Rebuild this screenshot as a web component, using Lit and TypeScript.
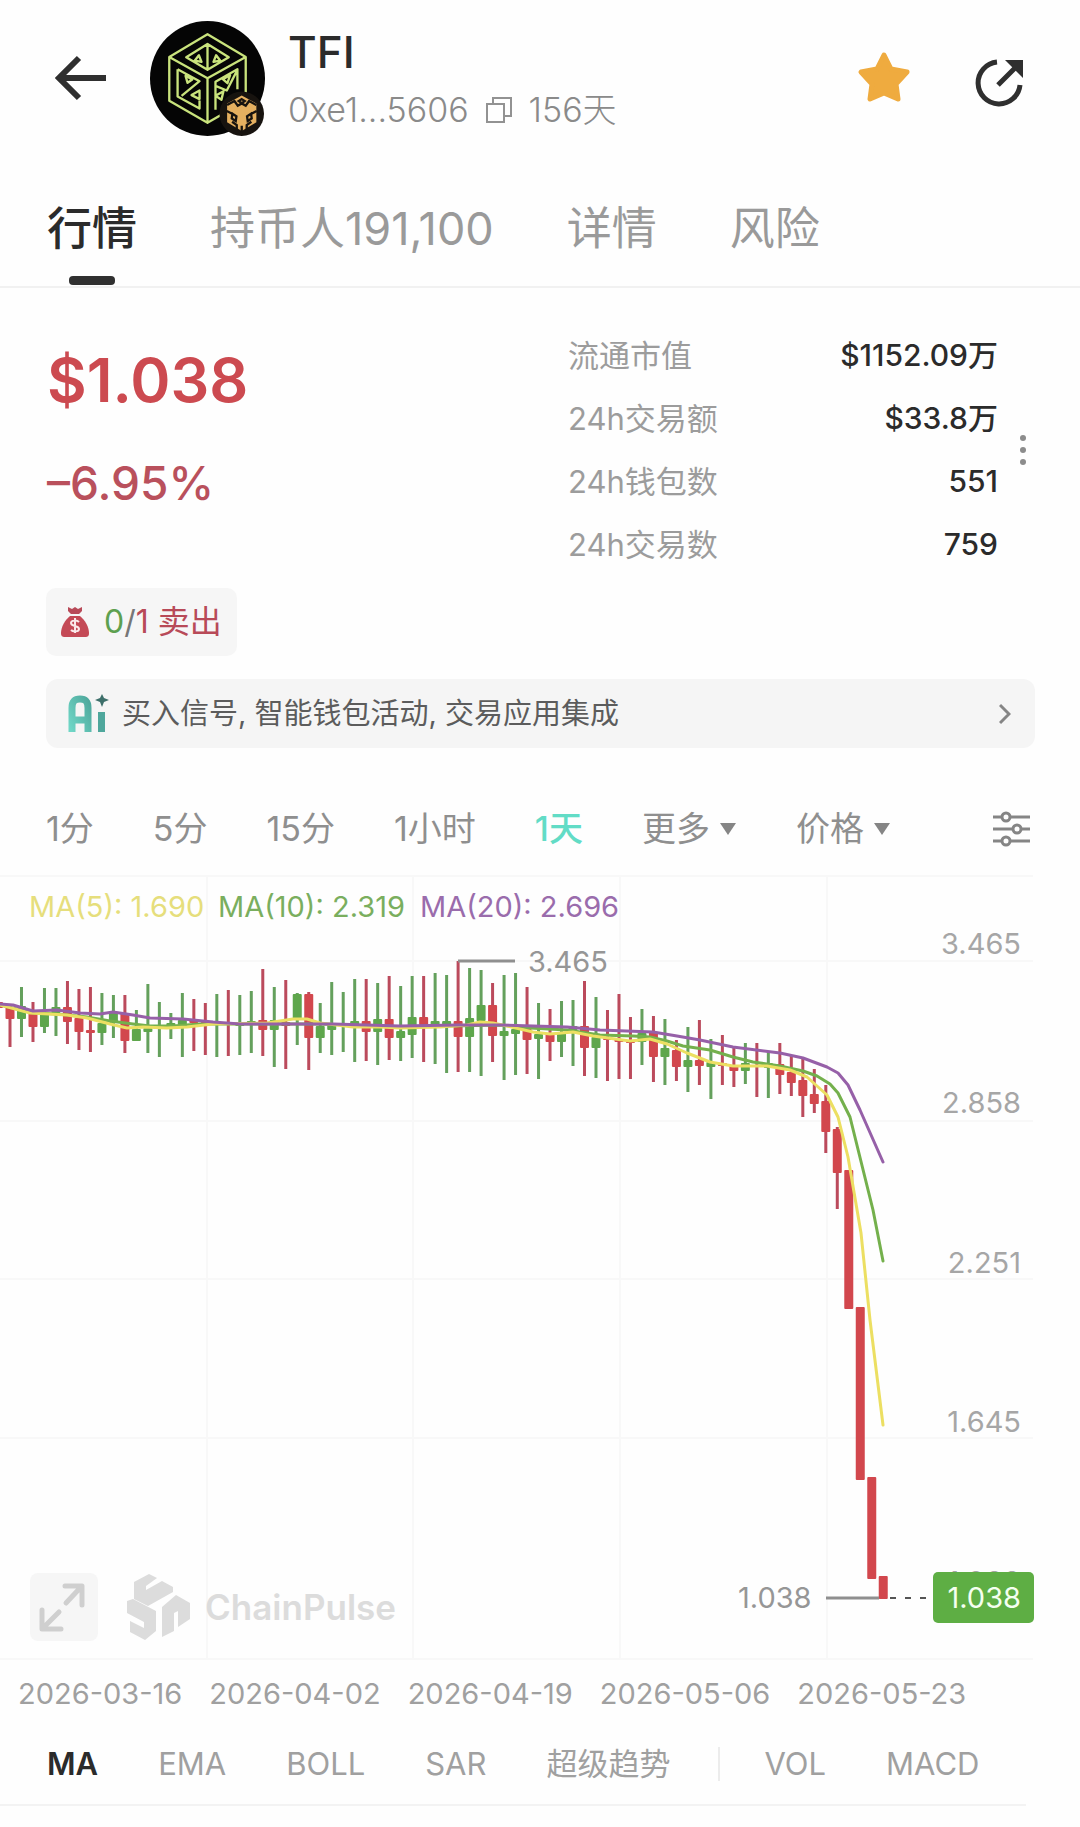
import { LitElement, html, svg, css } from "lit";
import { customElement, property, state } from "lit/decorators.js";
import { classMap } from "lit/directives/class-map.js";

type Dir = "u" | "d";
// direction, wick top, body top, body bottom, wick bottom
type Candle = [Dir, number, number, number, number];

const CHART_TOP = 875;
const CANDLE_STEP = 11.49;

const CANDLES: Candle[] = [
  ["d", 1000, 1002, 1008, 1009],
  ["d", 1005, 1007, 1019, 1047],
  ["u", 987, 1006, 1019, 1037],
  ["d", 1002, 1012, 1027, 1042],
  ["u", 988, 1014, 1027, 1033],
  ["u", 988, 1007, 1013, 1036],
  ["d", 981, 1007, 1022, 1044],
  ["d", 989, 1018, 1032, 1050],
  ["d", 987, 1030, 1033, 1052],
  ["u", 993, 1023, 1033, 1045],
  ["u", 995, 1013, 1023, 1038],
  ["d", 995, 1013, 1041, 1053],
  ["u", 1010, 1029, 1041, 1041],
  ["u", 984, 1028, 1032, 1053],
  ["u", 1002, 1025, 1027, 1057],
  ["u", 1013, 1023, 1028, 1039],
  ["u", 993, 1020, 1025, 1057],
  ["d", 999, 1019, 1023, 1051],
  ["d", 1003, 1022, 1024, 1055],
  ["u", 994, 1022, 1024, 1057],
  ["d", 990, 1023, 1025, 1056],
  ["u", 995, 1022, 1026, 1055],
  ["u", 991, 1021, 1025, 1053],
  ["d", 969, 1020, 1030, 1056],
  ["u", 987, 1020, 1030, 1067],
  ["d", 980, 1022, 1026, 1069],
  ["u", 993, 994, 1020, 1045],
  ["d", 992, 994, 1038, 1070],
  ["u", 1003, 1026, 1038, 1053],
  ["u", 982, 1024, 1030, 1055],
  ["u", 992, 1023, 1026, 1052],
  ["u", 979, 1021, 1025, 1062],
  ["d", 979, 1021, 1032, 1061],
  ["u", 983, 1019, 1032, 1065],
  ["d", 976, 1019, 1038, 1060],
  ["u", 986, 1031, 1038, 1061],
  ["u", 976, 1017, 1035, 1058],
  ["d", 976, 1017, 1025, 1062],
  ["u", 973, 1021, 1025, 1064],
  ["u", 975, 1021, 1025, 1073],
  ["d", 961, 1021, 1037, 1072],
  ["u", 968, 1018, 1037, 1072],
  ["u", 970, 1005, 1021, 1076],
  ["d", 983, 1005, 1036, 1062],
  ["u", 975, 1031, 1036, 1080],
  ["u", 973, 1029, 1034, 1075],
  ["d", 987, 1029, 1040, 1074],
  ["u", 1003, 1034, 1039, 1079],
  ["d", 1009, 1034, 1042, 1061],
  ["u", 1001, 1033, 1042, 1057],
  ["u", 1000, 1026, 1030, 1066],
  ["d", 981, 1026, 1048, 1076],
  ["u", 997, 1037, 1048, 1078],
  ["d", 1010, 1037, 1040, 1081],
  ["d", 994, 1039, 1042, 1079],
  ["d", 1017, 1040, 1043, 1079],
  ["u", 1009, 1033, 1042, 1065],
  ["d", 1016, 1032, 1057, 1082],
  ["u", 1019, 1048, 1057, 1085],
  ["d", 1040, 1050, 1067, 1081],
  ["u", 1027, 1060, 1067, 1092],
  ["d", 1020, 1060, 1066, 1085],
  ["u", 1039, 1062, 1067, 1099],
  ["d", 1035, 1063, 1066, 1085],
  ["d", 1047, 1065, 1071, 1087],
  ["u", 1043, 1063, 1071, 1084],
  ["d", 1043, 1065, 1067, 1097],
  ["u", 1052, 1063, 1068, 1098],
  ["d", 1043, 1064, 1075, 1094],
  ["d", 1055, 1072, 1083, 1096],
  ["d", 1058, 1080, 1096, 1117],
  ["d", 1069, 1094, 1104, 1113],
  ["d", 1085, 1101, 1132, 1153],
  ["d", 1127, 1129, 1173, 1209],
  ["d", 1170, 1170, 1309, 1309],
  ["d", 1307, 1307, 1480, 1480],
  ["d", 1477, 1477, 1579, 1579],
  ["d", 1576, 1576, 1599, 1599],
];

const MA_LINES = [
  {
    name: "ma10",
    points:
      "0,1005 33,1013 57,1014 87,1017 110,1021 133,1024 150,1026 173,1026 200,1024 320,1024 400,1027 500,1025 530,1028 567,1030 600,1035 633,1036 650,1037 667,1041 683,1046 710,1050 733,1057 753,1062 780,1066 803,1071 817,1076 830,1084 838,1093 850,1117 873,1210 883,1261",
  },
  {
    name: "ma5",
    points:
      "0,1005 30,1013 67,1015 87,1018 110,1024 127,1028 143,1027 167,1028 187,1027 213,1024 267,1023 293,1019 307,1019 320,1023 353,1027 380,1027 400,1028 440,1027 467,1025 480,1022 493,1023 507,1026 533,1032 550,1034 573,1032 593,1036 630,1041 650,1039 667,1044 687,1053 710,1062 733,1066 767,1066 790,1070 807,1077 827,1095 838,1117 848,1157 861,1233 870,1320 883,1425",
  },
  {
    name: "ma20",
    points:
      "0,1004 13,1005 33,1011 57,1010 80,1013 100,1014 113,1012 133,1015 150,1018 183,1019 213,1022 240,1024 333,1024 400,1026 458,1025 500,1025 533,1026 567,1027 600,1030 653,1032 677,1036 700,1040 733,1047 780,1053 803,1058 827,1067 838,1073 848,1085 860,1110 883,1162",
  },
];

const STATS = [
  ["流通市值", "$1152.09万"],
  ["24h交易额", "$33.8万"],
  ["24h钱包数", "551"],
  ["24h交易数", "759"],
];

const TABS = ["行情", "持币人191,100", "详情", "风险"];
const INTERVALS = ["1分", "5分", "15分", "1小时", "1天"];
const MENUS = ["更多", "价格"];
const DATES = ["2026-03-16", "2026-04-02", "2026-04-19", "2026-05-06", "2026-05-23"];
const MAIN_INDICATORS = ["MA", "EMA", "BOLL", "SAR", "超级趋势"];
const SUB_INDICATORS = ["VOL", "MACD"];

const PRICE_TICKS = [
  { label: "3.465", y: 954 },
  { label: "2.858", y: 1113 },
  { label: "2.251", y: 1273 },
  { label: "1.645", y: 1432 },
  { label: "1.038", y: 1592 },
];

const baseButton = css`
  button {
    margin: 0;
    padding: 0;
    border: 0;
    background: none;
    font: inherit;
    color: inherit;
    line-height: inherit;
    white-space: nowrap;
    cursor: pointer;
  }

  svg {
    display: block;
  }
`;

@customElement("price-chart")
export class PriceChart extends LitElement {
  @property({ attribute: false }) candles: Candle[] = CANDLES;

  static styles = [
    baseButton,
    css`
      :host {
        display: block;
        position: relative;
      }

      .plot {
        width: 100%;
        height: auto;
        font-family: Inter, "Liberation Sans", sans-serif;
        font-size: 29px;
      }

      .grid {
        stroke: #f8f8f8;
        stroke-width: 2;
      }

      .up {
        fill: #5ea64c;
      }

      .down {
        fill: #d2474d;
      }

      .wick.up {
        fill: #64a05c;
      }

      .wick.down {
        fill: #bb4a5c;
      }

      .line {
        fill: none;
        stroke-width: 3;
        stroke-linejoin: round;
        stroke-linecap: round;
      }

      .ma5 {
        stroke: #ecdf62;
      }

      .ma10 {
        stroke: #74b04c;
      }

      .ma20 {
        stroke: #9660a8;
      }

      .tick {
        fill: #a6a6a6;
        text-anchor: end;
      }

      .note {
        fill: #969696;
      }

      .leader {
        stroke: #8f8f8f;
        stroke-width: 3;
      }

      .dashed {
        stroke: #555;
        stroke-width: 2;
        stroke-dasharray: 6 9;
      }

      .badge {
        fill: #5eae44;
      }

      .badge-text {
        fill: #f4fff0;
        text-anchor: end;
      }

      .legend-5 {
        fill: #e6de7c;
      }

      .legend-10 {
        fill: #7aae5e;
      }

      .legend-20 {
        fill: #9a6cac;
      }

      .overlay {
        position: absolute;
        left: 30px;
        bottom: 19px;
        display: flex;
        align-items: center;
        color: #dcdcdc;
      }

      .expand {
        width: 68px;
        height: 68px;
        margin-right: 28px;
        border-radius: 8px;
        background: #f6f6f6;
      }

      .brand {
        margin-left: 14px;
        font: 600 35px/44px Inter, "Liberation Sans", sans-serif;
      }
    `,
  ];

  private renderCandle([dir, high, top, bottom, low]: Candle, i: number) {
    const x = 10 + CANDLE_STEP * (i - 1);
    const cls = dir === "u" ? "up" : "down";
    return svg`
      <rect class="wick ${cls}" x=${x - 1.5} y=${high} width="3" height=${low - high}></rect>
      <rect class=${cls} x=${x - 4.5} y=${top} width="9" height=${bottom - top} rx="1"></rect>
    `;
  }

  render() {
    return html`
      <svg class="plot" viewBox="0 ${CHART_TOP} 1080 785" role="img" aria-label="K线图">
        <g class="grid">
          ${[876, 961, 1121, 1279, 1438, 1659].map(
            (y) => svg`<line x1="0" x2="1033" y1=${y} y2=${y}></line>`,
          )}
          ${[207, 413, 620, 827].map((x) => svg`<line x1=${x} x2=${x} y1="875" y2="1660"></line>`)}
        </g>
        ${this.candles.map((c, i) => this.renderCandle(c, i))}
        ${MA_LINES.map((l) => svg`<polyline class="line ${l.name}" points=${l.points}></polyline>`)}

        <text class="legend-5" x="29" y="917">MA(5): 1.690</text>
        <text class="legend-10" x="218" y="917">MA(10): 2.319</text>
        <text class="legend-20" x="420" y="917">MA(20): 2.696</text>

        <line class="leader" x1="458" x2="515" y1="961" y2="961"></line>
        <text class="note" x="528" y="972">3.465</text>
        <line class="leader" x1="826" x2="879" y1="1598" y2="1598"></line>
        <text class="note" x="738" y="1608">1.038</text>

        ${PRICE_TICKS.map((t) => svg`<text class="tick" x="1021" y=${t.y}>${t.label}</text>`)}
        <line class="dashed" x1="890" x2="933" y1="1598" y2="1598"></line>
        <rect class="badge" x="933" y="1572" width="101" height="51" rx="5"></rect>
        <text class="badge-text" x="1021" y="1608">1.038</text>
      </svg>
      <div class="overlay">
        <button class="expand" aria-label="全屏">
          <svg width="68" height="68" viewBox="0 0 68 68" fill="none" stroke="#cfcfcf" stroke-width="5" stroke-linecap="round" stroke-linejoin="round">
            <path d="M35 13h17v19M51 14 36 30M12 37v19h19M13 55l16-16"></path>
          </svg>
        </button>
        <svg width="65" height="68" viewBox="0 0 65 68" fill="currentColor">
          <path d="M8 9 23 1l8 4-11 8v4l16-9 11 6v5L22 33 8 26z"></path>
          <path d="M1 28l6-2 23 12v20L19 67 4 59V48l14 7v-6L1 40z"></path>
          <path d="M36 34l14-12 14 8v16l-12 8V38l-4 2v18l-12 6z"></path>
        </svg>
        <span class="brand">ChainPulse</span>
      </div>
    `;
  }
}

@customElement("app-root")
export class AppRoot extends LitElement {
  @state() private tab = "行情";
  @state() private interval = "1天";
  @state() private indicator = "MA";

  static styles = [
    baseButton,
    css`
      :host {
        display: block;
        padding-bottom: 21px;
        background: #fefefe;
        color: #2b2b2b;
        font-family: Inter, "Noto Sans CJK SC", sans-serif;
      }

      header {
        display: flex;
        align-items: center;
        padding: 20px 55px 20px 54px;
      }

      .token {
        margin: 0 23px 0 42px;
      }

      .title {
        flex: 1;
      }

      h1 {
        margin: 0;
        font-size: 44px;
        font-weight: 500;
        line-height: 64px;
      }

      .sub {
        display: flex;
        align-items: center;
        gap: 16px;
        font-size: 34px;
        font-weight: 300;
        line-height: 52px;
        color: #8a8a8a;
      }

      .star {
        margin-right: 64px;
      }

      .tabs {
        display: flex;
        gap: 73px;
        padding: 0 47px;
        border-bottom: 2px solid #f1f1f1;
        font-size: 45px;
        color: #9a9a9a;
      }

      .tab {
        position: relative;
        padding: 43px 0 27px;
        line-height: 60px;
      }

      .tab.active {
        font-weight: 500;
        color: #2b2b2b;
      }

      .tab.active::after {
        content: "";
        position: absolute;
        left: 50%;
        bottom: 1px;
        width: 46px;
        height: 9px;
        margin-left: -23px;
        border-radius: 4px;
        background: #303030;
      }

      .summary {
        display: flex;
        padding: 36px 54px 12px 47px;
      }

      .quote {
        flex: 1;
        padding-top: 16px;
        color: #cc4a50;
      }

      .price {
        font-size: 61px;
        font-weight: 600;
        line-height: 80px;
      }

      .change {
        margin-top: 35px;
        font-size: 46px;
        font-weight: 500;
        line-height: 56px;
        color: #b9505c;
      }

      .stats {
        flex: 0 0 430px;
        margin: 0;
      }

      .stat {
        display: flex;
        justify-content: space-between;
        font-size: 31px;
        line-height: 63px;
      }

      dt {
        color: #9c9c9c;
      }

      dd {
        margin: 0;
        font-size: 30px;
        font-weight: 500;
      }

      .more {
        margin-left: 22px;
      }

      .signals {
        display: flex;
        flex-direction: column;
        align-items: flex-start;
        gap: 23px;
        padding: 0 45px 0 46px;
      }

      .chip {
        display: flex;
        align-items: center;
        gap: 15px;
        padding: 0 15px;
        border-radius: 10px;
        background: #f6f6f6;
        font-size: 32px;
        line-height: 68px;
        color: #b84a58;
      }

      .chip .buy {
        color: #5da050;
      }

      .chip .slash {
        color: #777;
      }

      .signals .ai {
        display: flex;
        align-items: center;
        align-self: stretch;
        gap: 12px;
        padding: 0 24px 0 21px;
        border-radius: 12px;
        background: #f5f5f5;
        font-size: 29px;
        line-height: 69px;
        color: #5c5c5c;
      }

      .ai-text {
        flex: 1;
        text-align: left;
      }

      .intervals {
        display: flex;
        align-items: center;
        gap: 59px;
        padding: 57px 50px 22px 46px;
        font-size: 34px;
        line-height: 48px;
        color: #8f8f8f;
      }

      .intervals .active {
        font-weight: 500;
        color: #62dcc6;
      }

      .menu {
        display: flex;
        align-items: center;
        gap: 9px;
      }

      .settings {
        margin-left: auto;
      }

      .dates {
        display: flex;
        gap: 27px;
        padding: 14px 18px 28px;
        font-size: 29px;
        line-height: 40px;
        color: #a0a0a0;
      }

      .indicators {
        display: flex;
        align-items: center;
        gap: 60px;
        margin-right: 54px;
        padding: 0 0 18px 47px;
        border-bottom: 2px solid #f3f3f3;
        font-size: 31px;
        line-height: 44px;
        color: #a0a0a0;
      }

      .indicators .active {
        font-weight: 600;
        color: #2b2b2b;
      }

      .divider {
        width: 2px;
        height: 34px;
        margin: 0 -16px 0 -12px;
        background: #ececec;
      }
    `,
  ];

  private renderHeader() {
    return html`
      <header>
        <button aria-label="返回">
          <svg width="54" height="54" viewBox="0 0 54 54" fill="none" stroke="#2f2f2f" stroke-width="6">
            <path d="M52 27H6M25 7 5 27l20 20"></path>
          </svg>
        </button>
        <svg class="token" width="115" height="115" viewBox="15 15 346 346">
          <circle cx="188" cy="188" r="173" fill="#050505"></circle>
          <g fill="none" stroke="#c9e37c" stroke-width="7" stroke-linejoin="round">
            <path d="M188 55 303 123V255L188 321 73 255V123zM73 123 188 187 303 123M188 187V321"></path>
            <path d="M188 84 252 124 188 162 124 124zM188 84v78M162 118l-12 16 20 4zM214 118l12 16-20 4z"></path>
            <path d="M98 160v82l66 36v-24M98 160l66 36-54 44M122 180l20 11-14 10zM164 224v26l-24-12z"></path>
            <path d="M212 282v-84l66-38v60M212 210l34 14 32-62M212 240l24-14-6 26zM256 178l-22 12 14 12z"></path>
          </g>
          <circle cx="291" cy="294" r="67" fill="#17130f"></circle>
          <path d="M291 239 335 263V320L291 346 247 320V263z" fill="#e5b060"></path>
          <g fill="none" stroke="#17130f" stroke-width="7">
            <path d="M247 268l22-12 10 14 12-7 12 7 10-14 22 12M246 286l16 8M336 286l-16 8M276 346v-18l-14-10M306 346v-18l14-10M291 346v-16"></path>
            <path d="M291 250l9 6-9 6-9-6zM263 294l12 8-2 14-12-8zM319 294l-12 8 2 14 12-8z"></path>
          </g>
        </svg>
        <div class="title">
          <h1>TFI</h1>
          <div class="sub">
            <span>0xe1...5606</span>
            <button aria-label="复制">
              <svg width="28" height="28" viewBox="0 0 28 28" fill="none" stroke="#929292" stroke-width="2">
                <path d="M2 8h17v18H2zM8 8V2h18v18h-7"></path>
              </svg>
            </button>
            <span>156天</span>
          </div>
        </div>
        <button class="star" aria-label="收藏">
          <svg width="54" height="54" viewBox="0 0 54 54">
            <path d="M27 4 34 18 50 21 39 33 41 48 27 42 13 48 15 33 4 21 20 18z" fill="#efab3f" stroke="#efab3f" stroke-width="5" stroke-linejoin="round"></path>
          </svg>
        </button>
        <button aria-label="分享">
          <svg width="50" height="60" viewBox="0 0 50 60" fill="none" stroke="#2f2f2f" stroke-width="5">
            <path d="M22 14A21 21 0 1 0 45 37M23 37 41 19"></path>
            <path d="M30 12h18v18z" fill="#2f2f2f" stroke="none"></path>
          </svg>
        </button>
      </header>
    `;
  }

  private renderSummary() {
    return html`
      <section class="summary">
        <div class="quote">
          <div class="price">$1.038</div>
          <div class="change">–6.95%</div>
        </div>
        <dl class="stats">
          ${STATS.map(
            ([label, value]) => html`
              <div class="stat">
                <dt>${label}</dt>
                <dd>${value}</dd>
              </div>
            `,
          )}
        </dl>
        <button class="more" aria-label="更多数据">
          <svg width="6" height="30" viewBox="0 0 6 30" fill="#8c8c8c">
            <circle cx="3" cy="3" r="3"></circle>
            <circle cx="3" cy="15" r="3"></circle>
            <circle cx="3" cy="27" r="3"></circle>
          </svg>
        </button>
      </section>
    `;
  }

  private renderSignals() {
    return html`
      <section class="signals">
        <button class="chip">
          <svg width="28" height="30" viewBox="0 0 28 30">
            <path d="M7 0l4 2 3-2 3 2 4-2v4l-3 3h-8L7 4z" fill="#b84a58"></path>
            <path d="M9 9h10c5 4 9 11 9 17 0 3-1 4-4 4H4c-3 0-4-1-4-4 0-6 4-13 9-17z" fill="#c44a56"></path>
            <path d="M18 15c-2-2-8-2-8 1 0 4 8 2 8 6 0 3-6 3-8 1M14 11v15" fill="none" stroke="#fbe9ea" stroke-width="2"></path>
          </svg>
          <span><span class="buy">0</span><span class="slash">/</span>1 卖出</span>
        </button>
        <button class="ai">
          <svg width="43" height="40" viewBox="0 0 43 40">
            <defs>
              <linearGradient id="ai" x1="0" y1="1" x2="1" y2="0">
                <stop offset="0" stop-color="#6fd6c6"></stop>
                <stop offset="1" stop-color="#4fa99d"></stop>
              </linearGradient>
            </defs>
            <path d="M5 38V14C5 7 8 5 13 5s8 2 8 9v24M5 26h16" fill="none" stroke="url(#ai)" stroke-width="7"></path>
            <path d="M31 18h7v20h-7z" fill="#4fa79c"></path>
            <path d="M35 0l2 4 5 2-5 2-2 5-2-5-5-2 5-2z" fill="#3d6f6a"></path>
          </svg>
          <span class="ai-text">买入信号, 智能钱包活动, 交易应用集成</span>
          <svg width="12" height="22" viewBox="0 0 12 22" fill="none" stroke="#858585" stroke-width="3">
            <path d="M1 2l9 9-9 9"></path>
          </svg>
        </button>
      </section>
    `;
  }

  private renderIntervals() {
    return html`
      <nav class="intervals">
        ${INTERVALS.map(
          (i) => html`
            <button class=${classMap({ active: i === this.interval })} @click=${() => (this.interval = i)}>${i}</button>
          `,
        )}
        ${MENUS.map(
          (m) => html`
            <button class="menu">
              ${m}
              <svg width="18" height="13" viewBox="0 0 18 13" fill="#858585"><path d="M1 0h16L9 12z"></path></svg>
            </button>
          `,
        )}
        <button class="settings" aria-label="图表设置">
          <svg width="37" height="36" viewBox="0 0 37 36" fill="none" stroke="#858585" stroke-width="3">
            <path d="M0 6h9M17 6h20M0 18h20M28 18h9M0 30h9M17 30h20"></path>
            <circle cx="13" cy="6" r="4"></circle>
            <circle cx="24" cy="18" r="4"></circle>
            <circle cx="13" cy="30" r="4"></circle>
          </svg>
        </button>
      </nav>
    `;
  }

  private renderIndicator(name: string) {
    return html`
      <button class=${classMap({ active: name === this.indicator })} @click=${() => (this.indicator = name)}>
        ${name}
      </button>
    `;
  }

  render() {
    return html`
      ${this.renderHeader()}
      <nav class="tabs">
        ${TABS.map(
          (t) => html`
            <button class=${classMap({ tab: true, active: t === this.tab })} @click=${() => (this.tab = t)}>${t}</button>
          `,
        )}
      </nav>
      ${this.renderSummary()} ${this.renderSignals()} ${this.renderIntervals()}
      <price-chart></price-chart>
      <div class="dates">${DATES.map((d) => html`<time datetime=${d}>${d}</time>`)}</div>
      <nav class="indicators">
        ${MAIN_INDICATORS.map((n) => this.renderIndicator(n))}
        <span class="divider"></span>
        ${SUB_INDICATORS.map((n) => this.renderIndicator(n))}
      </nav>
    `;
  }
}

declare global {
  interface HTMLElementTagNameMap {
    "app-root": AppRoot;
    "price-chart": PriceChart;
  }
}
